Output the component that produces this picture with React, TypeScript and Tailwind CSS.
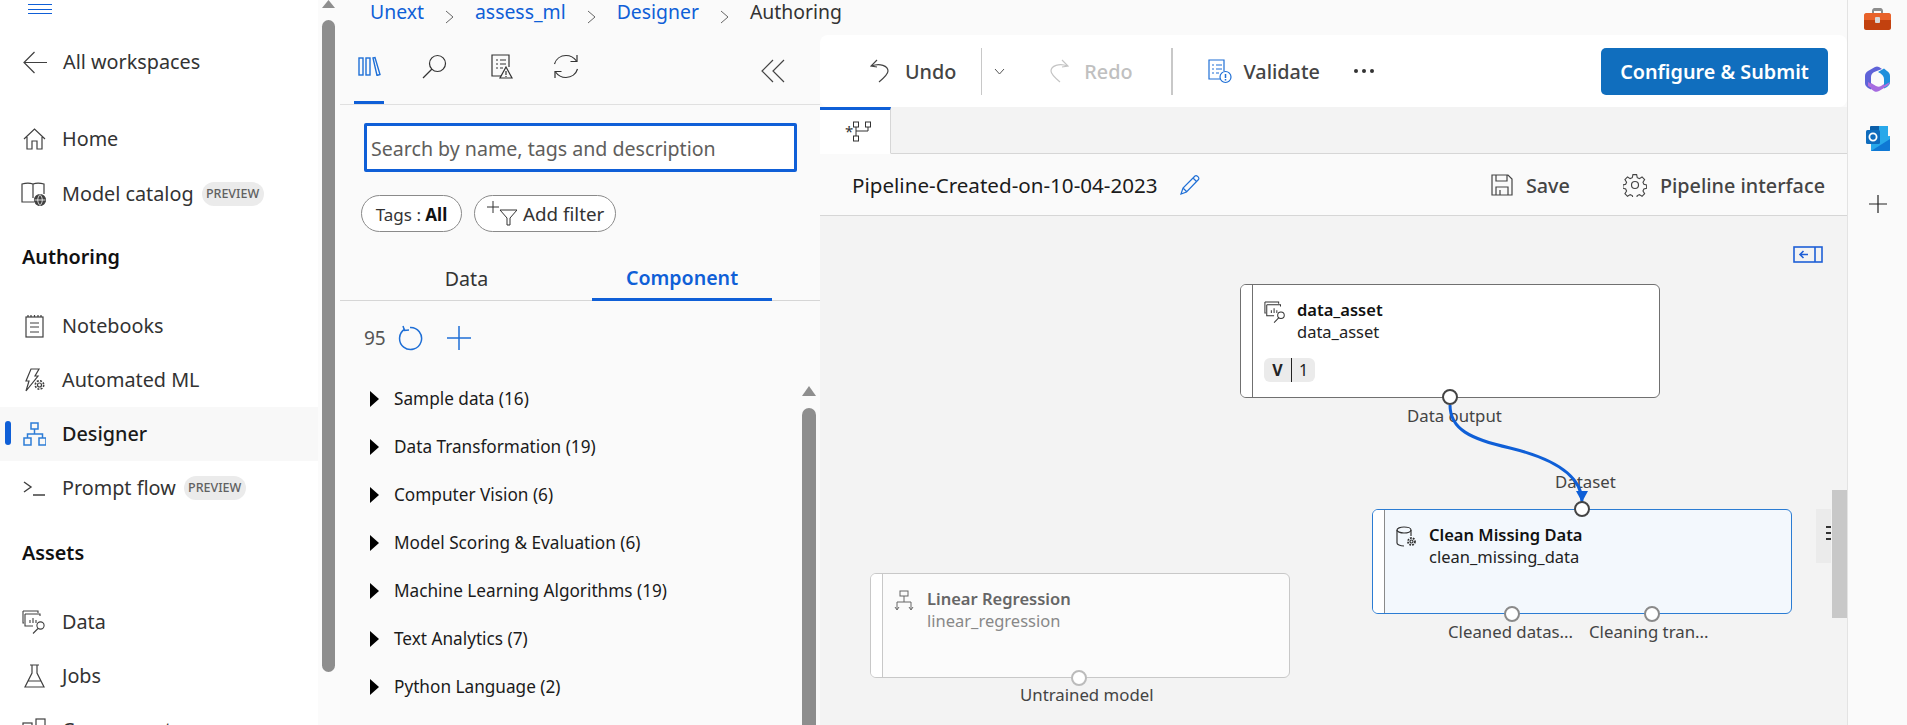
import React from 'react';

const Stroke: React.FC<{ w: number; h: number; color?: string; sw?: number; className?: string; children: React.ReactNode }> = ({ w, h, color = '#404040', sw = 1.2, className, children }) => (
  <svg width={w} height={h} viewBox={`0 0 ${w} ${h}`} fill="none" stroke={color} strokeWidth={sw} className={`shrink-0 ${className ?? ''}`}>
    {children}
  </svg>
);

const DataIcon: React.FC<{ w?: number; color?: string }> = ({ w = 24, color = '#404040' }) => (
  <svg width={w} height={w} viewBox="0 0 24 24" fill="none" stroke={color} strokeWidth="1.1" className="shrink-0">
    <path d="M1 1h15v2M1 1v12h1" />
    <path d="M3 4h15v2M3 4v12h8" />
    <path d="M8 13V10M11 13V8M14 13v-3" />
    <circle cx="18.5" cy="15.5" r="3.6" />
    <path d="M16 18.5 11 23.5" />
  </svg>
);

const CaretRow: React.FC<{ label: string }> = ({ label }) => (
  <div className="flex h-12 items-center pl-[30px]">
    <svg width="9" height="16" viewBox="0 0 9 16" className="shrink-0"><path d="M0 0l9 8-9 8z" fill="#000" /></svg>
    <span className="ml-[15px] text-[17.2px] text-[#1b1b1b]">{label}</span>
  </div>
);

const Preview = () => (
  <span className="ml-2 flex h-6 w-[62px] items-center justify-center rounded-full bg-[#ebebeb] text-[12.5px] font-medium text-[#616161]">PREVIEW</span>
);

const NavRow: React.FC<{ icon: React.ReactNode; label: string; active?: boolean; badge?: boolean }> = ({ icon, label, active, badge }) => (
  <div className={`relative flex h-[54px] items-center ${active ? 'bg-[#f8f8f8]' : ''}`}>
    {active && <span className="absolute left-[5px] top-[14px] h-6 w-1.5 rounded-full bg-[#0f5fd7]" />}
    <span className="flex w-[62px] justify-center pl-[6px]">{icon}</span>
    <span className={`text-[19.8px] ${active ? 'font-medium text-[#1b1b1b]' : 'text-[#333]'}`}>{label}</span>
    {badge && <Preview />}
  </div>
);

const NavHead: React.FC<{ label: string }> = ({ label }) => (
  <div className="flex h-[54px] items-center pl-[22px] text-[19.8px] font-semibold text-[#111]">{label}</div>
);

const Nav = () => (
  <aside className="flex w-[340px] shrink-0 overflow-hidden bg-[#fbfbfb]">
    <div className="w-[318px] shrink-0 bg-white">
      <div className="flex h-[35px] flex-col gap-[3.5px] pl-[28px] pt-1">
        <span className="h-px w-6 bg-[#0f5fd7]" />
        <span className="h-px w-6 bg-[#0f5fd7]" />
        <span className="h-px w-6 bg-[#0f5fd7]" />
      </div>
      <div className="flex h-[54px] items-center pl-[23px]">
        <Stroke w={24} h={23}><path d="M24 11.5H1M11.5 1 1 11.5 11.5 22" /></Stroke>
        <span className="ml-4 text-[19.8px] text-[#333]">All workspaces</span>
      </div>
      <div className="h-[23px]" />
      <NavRow label="Home" icon={<Stroke w={23} h={22}><path d="M1 11 11.5 1 22 11M4 9v12h5v-8h5v8h5V9" /></Stroke>} />
      <div className="h-px" />
      <NavRow label="Model catalog" badge icon={
        <Stroke w={26} h={24}><path d="M12 2C9 .8 5 .8 1 2v18h12M12 2c3-1.2 7-1.2 11 0v10M12 2v14" /><circle cx="19" cy="18" r="5.5" fill="#404040" /><path d="M13.5 18h11M19 12.5c-3 3.5-3 7.500 0 11M19 12.5c3 3.500 3 7.500 0 11" stroke="#fff" strokeWidth="0.8" /></Stroke>
      } />
      <div className="h-[9px]" />
      <NavHead label="Authoring" />
      <div className="h-[15px]" />
      <NavRow label="Notebooks" icon={<Stroke w={19} h={24}><rect x="1" y="3" width="17" height="20" /><path d="M5 9h9M5 13h9M5 18h9M3 1v2M6 1v2M9.500 1v2M13 1v2M16 1v2" /></Stroke>} />
      <NavRow label="Automated ML" icon={<Stroke w={22} h={24}><path d="M8 1h8l-4 7h3L3 23l3-10H3L8 1z" /><circle cx="16.500" cy="17" r="2" /><circle cx="16.500" cy="17" r="4.200" strokeDasharray="2 1.300" strokeWidth="1.600" /></Stroke>} />
      <NavRow label="Designer" active icon={<Stroke w={23} h={24} color="#2d7cd6" sw={1.5}><rect x="8" y="1" width="7" height="6" /><rect x="1" y="16" width="7" height="7" /><rect x="16" y="16" width="7" height="7" /><path d="M11.500 7v5M4.500 16v-4h15v4" /></Stroke>} />
      <NavRow label="Prompt flow" badge icon={<Stroke w={23} h={18} sw={1.4}><path d="M1 3l7 5-7 5M10 16h12" /></Stroke>} />
      <div className="h-[11px]" />
      <NavHead label="Assets" />
      <div className="h-[15px]" />
      <NavRow label="Data" icon={<DataIcon />} />
      <NavRow label="Jobs" icon={<Stroke w={21} h={24}><path d="M6 1h9M8 1v8L1 23h19L13 9V1M4 17h13" /></Stroke>} />
      <NavRow label="Components" icon={<Stroke w={24} h={24}><rect x="1" y="5" width="9" height="9" /><rect x="14" y="1" width="9" height="9" /><rect x="1" y="14" width="9" height="9" /><rect x="14" y="14" width="9" height="9" /></Stroke>} />
    </div>
    <div className="relative ml-1 w-[13px]">
      <svg width="13" height="8" viewBox="0 0 13 8" className="block"><path d="M6.500 0 13 8H0z" fill="#8e8e8e" /></svg>
      <div className="mt-3 h-[652px] rounded-full bg-[#8e8e8e]" />
    </div>
  </aside>
);

const Crumb = () => (
  <span className="mx-[21px] inline-flex">
    <svg width="9" height="14" viewBox="0 0 9 14" fill="none" stroke="#666" strokeWidth="1"><path d="M1 1l7 6-7 6" /></svg>
  </span>
);

const Breadcrumb = () => (
  <div className="flex h-[35px] shrink-0 items-start bg-[#fafafa] pl-[30px] text-[19.4px] leading-[24px] text-[#0f5fd7]">
    <span>Unext</span>
    <span className="mt-[5px]"><Crumb /></span>
    <span>assess_ml</span>
    <span className="mt-[5px]"><Crumb /></span>
    <span>Designer</span>
    <span className="mt-[5px]"><Crumb /></span>
    <span className="text-[#333]">Authoring</span>
  </div>
);

const Panel = () => (
  <section className="flex w-[480px] shrink-0 flex-col overflow-hidden bg-[#fafafa]">
    <div className="relative flex h-[70px] shrink-0 items-center border-b border-[#e0e0e0] pl-[18px] pb-[7px]">
      <Stroke w={23} h={20} color="#1f6fd6" sw={1.4}><rect x="1" y="2" width="4" height="17" /><rect x="8" y="2" width="4" height="17" /><path d="M15 2l2-.5 5 17-3 1z" /></Stroke>
      <span className="ml-[41px]"><Stroke w={25} h={25} color="#333"><circle cx="15.500" cy="9.500" r="8" /><path d="M10 15 1 24" /></Stroke></span>
      <span className="ml-[44px]"><Stroke w={22} h={25} color="#333"><path d="M12 22H1V1h17v12M5 6h2M9 6h6M5 10h2M9 10h6M5 14h2M9 14h3" /><path d="M15 13l6 11H9z" fill="#fafafa" /><path d="M15 17v4M15 22v1" /></Stroke></span>
      <span className="ml-[40px]"><Stroke w={26} h={25} color="#333"><path d="M1.500 10C3 5 7.500 1.500 13 1.500c4.500 0 8 2 10.500 5.500M24.500 15c-1.500 5-6 8.500-11.500 8.500-4.500 0-8-2-10.500-5.500" /><path d="M24 1v6.500h-6.500M2 24v-6.500h6.500" /></Stroke></span>
      <span className="absolute left-[421px] top-[24px]"><Stroke w={24} h={24} color="#444"><path d="M12 1 1 12l11 11M23 1 12 12l11 11" /></Stroke></span>
      <span className="absolute bottom-0 left-[14px] h-[3px] w-[30px] bg-[#0f5fd7]" />
    </div>
    <div className="mx-6 mt-[18px] flex h-[49px] w-[433px] shrink-0 items-center rounded-[2px] border-[3px] border-[#0f5fd7] bg-white pl-1 pt-[2px] text-[19.6px] text-[#605e5c]">
      Search by name, tags and description
    </div>
    <div className="ml-[21px] mt-[23px] flex shrink-0 gap-3">
      <div className="flex h-[37px] w-[101px] items-center justify-center rounded-full border border-[#8a8a8a] bg-white pt-[3px] text-[17px] text-[#333]">Tags :&nbsp;<b className="font-bold text-[#111]">All</b></div>
      <div className="flex h-[37px] w-[142px] items-center rounded-full border border-[#8a8a8a] bg-white pl-3 text-[18.8px] text-[#333]">
        <Stroke w={30} h={25} color="#333" sw={1}><path d="M0 6h12M6 0v12M13 9h17l-7 8v7h-3v-7z" /></Stroke>
        <span className="ml-[6px] pt-[2px]">Add filter</span>
      </div>
    </div>
    <div className="mt-[27px] flex h-[42px] shrink-0 border-b border-[#d6d6d6]">
      <div className="ml-[21px] flex h-[42px] w-[211px] items-center justify-center pb-[2px] text-[19.6px] text-[#333]">Data</div>
      <div className="ml-5 flex h-[42px] w-[180px] items-center justify-center border-b-[3px] border-[#0f5fd7] pb-[2px] text-[19.6px] font-semibold text-[#0f5fd7]">Component</div>
    </div>
    <div className="ml-6 mt-6 flex h-[26px] shrink-0 items-center text-[19px] text-[#555]">
      <span>95</span>
      <span className="ml-[12px]"><Stroke w={26} h={26} color="#1f6fd6" sw={1.5}><path d="M7 4a11 11 0 1 0 5-1.500M5 1l1.500 4.500L11 5" /></Stroke></span>
      <span className="ml-[23px]"><Stroke w={24} h={24} color="#1f6fd6" sw={1.5}><path d="M0 12h24M12 0v24" /></Stroke></span>
    </div>
    <div className="relative mt-[24px] flex-1">
      <CaretRow label="Sample data (16)" />
      <CaretRow label="Data Transformation (19)" />
      <CaretRow label="Computer Vision (6)" />
      <CaretRow label="Model Scoring & Evaluation (6)" />
      <CaretRow label="Machine Learning Algorithms (19)" />
      <CaretRow label="Text Analytics (7)" />
      <CaretRow label="Python Language (2)" />
      <div className="absolute right-[4px] top-[11px] w-[14px]">
        <svg width="14" height="10" viewBox="0 0 14 10" className="block"><path d="M7 0l7 10H0z" fill="#8e8e8e" /></svg>
        <div className="mt-[12px] h-[400px] rounded-t-full bg-[#8e8e8e]" />
      </div>
    </div>
  </section>
);

const Toolbar = () => (
  <div className="flex h-[72px] shrink-0 items-center rounded-lg bg-white pl-[50px] pr-[19px] text-[19.8px]">
    <Stroke w={19} h={24} color="#444"><path d="M7 1 1 7l6 1M1.500 7C10 3.500 18 7 18 12c0 3-3 6-9 11" /></Stroke>
    <span className="ml-4 pt-[2px] font-medium text-[#444]">Undo</span>
    <span className="ml-[25px] h-[47px] w-px bg-[#c8c8c8]" />
    <span className="ml-3"><Stroke w={11} h={7} color="#555" sw={1}><path d="M1 1l4.500 5L10 1" /></Stroke></span>
    <span className="ml-[45px]"><Stroke w={19} h={24} color="#c4c4c4"><path d="M12 1l6 6-6 1M17.500 7C9 3.500 1 7 1 12c0 3 3 6 9 11" /></Stroke></span>
    <span className="ml-[15px] pt-[2px] font-medium text-[#c0c0c0]">Redo</span>
    <span className="ml-[38px] h-[47px] w-[2px] bg-[#c8c8c8]" />
    <span className="ml-[35px]"><Stroke w={24} h={25} color="#1f6fd6"><path d="M13 20H1V1h15v11M4 6h2M8 6h6M4 10h2M8 10h6M4 14h2M8 14h3" /><circle cx="17.500" cy="18" r="5.500" fill="#fff" /><path d="M17.500 15v4M17.500 20v1.500" strokeWidth="1.500" /></Stroke></span>
    <span className="ml-3 pt-[2px] font-medium text-[#444]">Validate</span>
    <span className="ml-[34px] flex gap-[4px]">
      <i className="h-1 w-1 rounded-full bg-[#333]" /><i className="h-1 w-1 rounded-full bg-[#333]" /><i className="h-1 w-1 rounded-full bg-[#333]" />
    </span>
    <button className="ml-auto flex h-[47px] w-[227px] items-center justify-center rounded-[5px] bg-[#106ebe] pt-[2px] text-[19.8px] font-semibold text-white">Configure &amp; Submit</button>
  </div>
);

const TabStrip = () => (
  <div className="flex h-[47px] shrink-0 bg-[#f3f3f3]">
    <div className="flex h-[47px] w-[71px] items-start border-t-[3px] border-r border-b border-t-[#0f5fd7] border-r-[#d6d6d6] border-b-white bg-white pl-[25px] pt-[11px]">
      <span className="text-[15px] leading-[20px] text-[#333]">*</span>
      <Stroke w={20} h={21} color="#333" sw={1} className="-ml-px"><rect x="1.500" y="1" width="5" height="5" /><rect x="13.500" y="1" width="5" height="5" /><rect x="1.500" y="15" width="5" height="5" /><path d="M4 6v9M4 10h12V6" /></Stroke>
    </div>
    <div className="flex-1 border-b border-[#d6d6d6]" />
  </div>
);

const TitleRow = () => (
  <div className="flex h-[62px] shrink-0 items-center border-b border-[#d6d6d6] bg-[#fafafa] pl-[32px] pr-[22px] text-[19.8px]">
    <span className="pt-[2px] text-[20.6px] text-[#1b1b1b]">Pipeline-Created-on-10-04-2023</span>
    <span className="ml-[22px]"><Stroke w={21} h={21} color="#1f6fd6"><path d="M1 20l2-6L15 2c1.500-1.500 5 2 3.500 3.500L6.500 18zM3 14l4 4M13 4l4 4" /></Stroke></span>
    <span className="ml-auto"><Stroke w={22} h={22} color="#444"><path d="M1 1h16l4 4v16H1zM5 1v6h11V1M5 21v-8h12v8M9 16v5" /></Stroke></span>
    <span className="ml-[13px] pt-[2px] font-medium text-[#444]">Save</span>
    <span className="ml-[53px]"><Stroke w={24} h={24} color="#444"><circle cx="12" cy="12" r="3.500" /><path d="M10 1h4l.7 3.300 2.300 1 2.900-1.800 2.800 2.800-1.800 2.900 1 2.300 3 .7v3.600l-3 .7-1 2.300 1.800 2.900-2.800 2.800-2.900-1.800-2.300 1-.7 3h-4l-.7-3-2.300-1-2.900 1.800-2.800-2.800 1.800-2.900-1-2.300-3-.7v-3.600l3-.7 1-2.300L1.300 6.300 4.100 3.500 7 5.300l2.300-1z" transform="scale(.92) translate(.8 .8)" /></Stroke></span>
    <span className="ml-[13px] pt-[2px] font-medium text-[#444]">Pipeline interface</span>
  </div>
);

const Port: React.FC<{ x: number; y: number; border: string }> = ({ x, y, border }) => (
  <span className={`absolute h-4 w-4 -translate-x-1/2 -translate-y-1/2 rounded-full border-2 bg-white ${border}`} style={{ left: x, top: y }} />
);

const Label: React.FC<{ x: number; y: number; children: React.ReactNode }> = ({ x, y, children }) => (
  <span className="absolute -translate-y-1/2 whitespace-nowrap text-[16.8px] text-[#444]" style={{ left: x, top: y }}>{children}</span>
);

const NodeCard: React.FC<{ x: number; y: number; h: number; box: string; strip: string; icon: React.ReactNode; title: string; sub: string; text: string; sub2: string; children?: React.ReactNode }> = ({ x, y, h, box, strip, icon, title, sub, text, sub2, children }) => (
  <div className={`absolute flex w-[420px] overflow-hidden rounded-[6px] border ${box}`} style={{ left: x, top: y, height: h }}>
    <div className={`w-3 shrink-0 border-r bg-white ${strip}`} />
    <div className="flex-1 pl-[11px] pt-[14px]">
      <div className="flex">
        <span className="flex w-[33px] pt-[2px]">{icon}</span>
        <div className="text-[16.5px] leading-[22px]">
          <div className={`font-semibold ${text}`}>{title}</div>
          <div className={sub2}>{sub}</div>
        </div>
      </div>
      {children}
    </div>
  </div>
);

const Canvas = () => (
  <div className="relative flex-1 overflow-hidden bg-[#f3f3f3]">
    <span className="absolute left-[973px] top-[30px]">
      <svg width="30" height="17" viewBox="0 0 30 17" fill="none" stroke="#1f5fd6" strokeWidth="1.600"><rect x="1" y="1" width="28" height="15" /><path d="M22 1v15M15 8.500H7M10.500 5 7 8.500l3.500 3.500" /></svg>
    </span>

    <NodeCard x={420} y={68} h={114} box="border-[#707070] bg-white" strip="border-[#707070]" text="text-[#111]" sub2="text-[#222]" title="data_asset" sub="data_asset" icon={<DataIcon w={22} color="#333" />}>
      <div className="mt-[15px] flex h-6 w-[51px] items-center rounded-[6px] bg-[#ebebeb] text-[16px] text-[#222]">
        <b className="w-[27px] text-center font-bold">V</b>
        <span className="h-6 w-px bg-[#222]" />
        <span className="pl-[7px]">1</span>
      </div>
    </NodeCard>
    <NodeCard x={552} y={293} h={105} box="border-[#2b7cd3] bg-[#f3f8fd]" strip="border-[#8a8a8a]" text="text-[#111]" sub2="text-[#222]" title="Clean Missing Data" sub="clean_missing_data" icon={
      <Stroke w={21} h={21} color="#333"><ellipse cx="8" cy="4" rx="7" ry="3" /><path d="M1 4v13c0 1.500 3 3 7 3M15 4v6" /><circle cx="15.500" cy="15.500" r="1.500" /><circle cx="15.500" cy="15.500" r="3.500" strokeDasharray="1.800 1.100" strokeWidth="1.800" /></Stroke>
    } />
    <NodeCard x={50} y={357} h={105} box="border-[#c8c8c8] bg-[#fbfbfb]" strip="border-[#c8c8c8]" text="text-[#666]" sub2="text-[#888]" title="Linear Regression" sub="linear_regression" icon={
      <Stroke w={20} h={21} color="#666" sw={1}><rect x="6" y="1" width="8" height="5" /><path d="M10 6v6M3 19v-7h14v7M1 17l2 3 2-3M15 17l2 3 2-3" /></Stroke>
    } />

    <Label x={587} y={200}>Data output</Label>
    <Label x={735} y={266}>Dataset</Label>
    <Label x={628} y={416}>Cleaned datas...</Label>
    <Label x={769} y={416}>Cleaning tran...</Label>
    <Label x={200} y={479}>Untrained model</Label>

    <svg width="1026" height="510" viewBox="0 0 1026 510" fill="none" className="pointer-events-none absolute left-0 top-0">
      <path d="M630 189c0 24 20 34 60 43 45 11 72 28 72 54" stroke="#0f5fd7" strokeWidth="3" />
      <path d="M756 275h12l-6 11z" fill="#0f5fd7" />
    </svg>

    <Port x={630} y={181} border="border-[#444]" />
    <Port x={762} y={293} border="border-[#444]" />
    <Port x={692} y={398} border="border-[#8a8a8a]" />
    <Port x={832} y={398} border="border-[#8a8a8a]" />
    <Port x={259} y={462} border="border-[#bbb]" />

    <div className="absolute left-[996px] top-[293px] h-[54px] w-[15px] bg-[#ebebeb]">
      <span className="absolute left-[10px] top-[17px] flex flex-col gap-[4px]"><i className="h-[2px] w-[5px] bg-[#333]" /><i className="h-[2px] w-[5px] bg-[#333]" /><i className="h-[2px] w-[5px] bg-[#333]" /></span>
    </div>
    <div className="absolute right-0 top-[274px] h-[128px] w-[15px] bg-[#c8c8c8]" />
  </div>
);

const Rail = () => (
  <aside className="flex w-[60px] shrink-0 flex-col items-center border-l border-[#e3e3e3] bg-[#fafafa] pt-[8px]">
    <svg width="27" height="23" viewBox="0 0 27 23">
      <path d="M8 6V3c0-1.500 1-3 2.500-3h6C18 0 19 1.500 19 3v3h-2V3h-7v3z" fill="#8c8c8c" />
      <path d="M0 7c0-1 1-2 2-2h23c1 0 2 1 2 2v5H0z" fill="#e8622a" />
      <path d="M0 12h27v8c0 1-1 2-2 2H2c-1 0-2-1-2-2z" fill="#c2410f" />
      <rect x="11" y="9" width="5" height="6" rx="1" fill="#d8d8d8" />
    </svg>
    <svg width="25" height="27" viewBox="0 0 25 27" className="mt-[35px]">
      <path d="M10 1 3 5c-2 1-3 3-3 5v7c0 2 1 3.500 3 5l3 1.500V11c0-3 2-4.500 4.500-5.500L17 3l-3-2c-1.500-.8-2.500-.8-4 0z" fill="#5f63d8" />
      <path d="M13 6l6-3.500L22 5c2 1 3 3 3 5v6c0 2-1 3.500-3 5l-3 1.500V13c0-3-2-5-6-7z" fill="#1f8fdc" />
      <path d="M3 20l7 4c1.500 1 3 1 4.500 0L22 20c1.500-1 2.500-2.500 3-4l-9 5c-3 1.500-5 0-7-1.500L3 16z" fill="#b070dc" />
      <path d="M6 23V17l5 3c2 1 3.500 1 5 0l3-2v4l-5 3c-2.500 1.500-4 1-8-2z" fill="#a66be0" />
      <circle cx="12.500" cy="13.500" r="4.800" fill="#fafafa" />
    </svg>
    <svg width="24" height="25" viewBox="0 0 24 25" className="mt-[33px]">
      <rect x="4" y="0" width="18" height="12" rx="1" fill="#0a5ea8" />
      <rect x="13" y="0" width="9" height="12" fill="#28a8ea" />
      <path d="M5 11l19-1v14a1 1 0 0 1-1 1H5z" fill="#28a8ea" />
      <path d="M5 25l19-12v11a1 1 0 0 1-1 1z" fill="#0f78d4" />
      <rect x="0" y="4" width="14" height="14" rx="1.500" fill="#0f6cbd" />
      <circle cx="7" cy="11" r="3.600" fill="none" stroke="#fff" strokeWidth="1.800" />
    </svg>
    <span className="mt-[44px]"><Stroke w={18} h={18} color="#222"><path d="M0 9h18M9 0v18" /></Stroke></span>
  </aside>
);

export default function App() {
  return (
    <div className="flex h-[725px] w-full overflow-hidden bg-[#fafafa] font-['Noto_Sans','Open_Sans',sans-serif]">
      <Nav />
      <div className="flex min-w-0 flex-1 flex-col">
        <Breadcrumb />
        <div className="flex min-h-0 flex-1">
          <Panel />
          <main className="flex min-w-0 flex-1 flex-col">
            <Toolbar />
            <TabStrip />
            <TitleRow />
            <Canvas />
          </main>
        </div>
      </div>
      <Rail />
    </div>
  );
}
